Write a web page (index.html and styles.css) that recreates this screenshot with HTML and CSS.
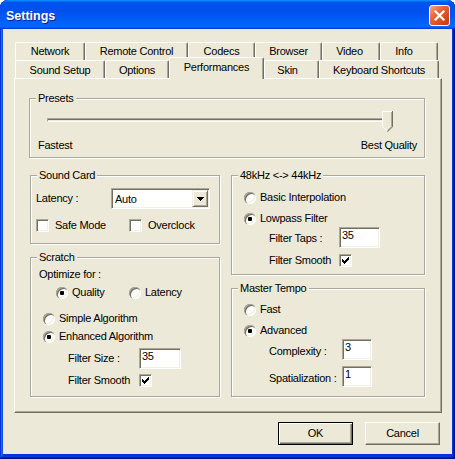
FILE: index.html
```html
<!DOCTYPE html>
<html>
<head>
<meta charset="utf-8">
<title>Settings</title>
<link rel="stylesheet" href="styles.css">
</head>
<body>
<div class="window">
  <div class="titlebar">
    <span class="title">Settings</span>
    <span class="close"><svg width="11" height="11" viewBox="0 0 11 11"><path d="M1.5 1.5L9.5 9.5M9.5 1.5L1.5 9.5" stroke="#fff" stroke-width="2.2" stroke-linecap="square"/></svg></span>
  </div>
  <div class="client">
    <div class="tabstrip">
      <div class="tabrow back">
        <div class="tab t-network">Network</div>
        <div class="tab t-remote">Remote Control</div>
        <div class="tab t-codecs">Codecs</div>
        <div class="tab t-browser">Browser</div>
        <div class="tab t-video">Video</div>
        <div class="tab t-info">Info</div>
      </div>
      <div class="tabrow front">
        <div class="tab t-sound">Sound Setup</div>
        <div class="tab t-options">Options</div>
        <div class="tab t-perf selected">Performances</div>
        <div class="tab t-skin">Skin</div>
        <div class="tab t-keys">Keyboard Shortcuts</div>
      </div>
    </div>

    <div class="panel">
      <div class="group presets">
        <div class="gtitle">Presets</div>
        <div class="gbody">
          <div class="slider">
            <div class="track"></div>
            <svg class="thumb" width="11" height="21" viewBox="0 0 11 21">
              <path d="M0 0H11V16L5.5 21L0 16Z" fill="#ECE9D8"/>
              <path d="M0.5 16V0.5H10" fill="none" stroke="#fff"/>
              <path d="M0.5 15.5L5.2 20.2" fill="none" stroke="#fff"/>
              <path d="M9.5 1V15.6L5.5 19.6" fill="none" stroke="#ACA899"/>
              <path d="M10.5 0V15.8L5.5 20.8" fill="none" stroke="#716F64"/>
            </svg>
          </div>
          <div class="scale"><span>Fastest</span><span>Best Quality</span></div>
        </div>
      </div>

      <div class="columns">
        <div class="col left">
          <div class="group soundcard">
            <div class="gtitle">Sound Card</div>
            <div class="gbody">
              <div class="row">
                <span class="lbl w-latency">Latency :</span>
                <div class="select">
                  <span class="val">Auto</span>
                  <span class="arrow"><svg width="7" height="4" viewBox="0 0 7 4" shape-rendering="crispEdges"><path d="M0 0h7v1H0zM1 1h5v1H1zM2 2h3v1H2zM3 3h1v1H3z" fill="#000"/></svg></span>
                </div>
              </div>
              <div class="row checks">
                <div class="opt w-safe"><span class="check"></span><span>Safe Mode</span></div>
                <div class="opt"><span class="check"></span><span>Overclock</span></div>
              </div>
            </div>
          </div>

          <div class="group scratch">
            <div class="gtitle">Scratch</div>
            <div class="gbody">
              <div class="line">Optimize for :</div>
              <div class="row optimize">
                <div class="opt w-quality"><span class="radio on"></span><span>Quality</span></div>
                <div class="opt"><span class="radio"></span><span>Latency</span></div>
              </div>
              <div class="opt algo simple"><span class="radio"></span><span>Simple Algorithm</span></div>
              <div class="opt algo enhanced"><span class="radio on"></span><span>Enhanced Algorithm</span></div>
              <div class="row sub sc-size">
                <span class="lbl w-fsize">Filter Size :</span>
                <span class="edit w-42">35</span>
              </div>
              <div class="row sub sc-smooth">
                <span class="lbl w-fsize">Filter Smooth</span>
                <span class="check"><svg width="7" height="7" viewBox="0 0 7 7" shape-rendering="crispEdges"><path d="M0 2h1v3H0zM1 3h1v3H1zM2 4h1v3H2zM3 3h1v3H3zM4 2h1v3H4zM5 1h1v3H5zM6 0h1v3H6z" fill="#000"/></svg></span>
              </div>
            </div>
          </div>
        </div>

        <div class="col right">
          <div class="group khz">
            <div class="gtitle">48kHz &lt;-&gt; 44kHz</div>
            <div class="gbody">
              <div class="opt"><span class="radio"></span><span>Basic Interpolation</span></div>
              <div class="opt lowpass"><span class="radio on"></span><span>Lowpass Filter</span></div>
              <div class="row sub k-taps">
                <span class="lbl w-taps low1">Filter Taps :</span>
                <span class="edit w-41">35</span>
              </div>
              <div class="row sub k-smooth">
                <span class="lbl w-taps">Filter Smooth</span>
                <span class="check"><svg width="7" height="7" viewBox="0 0 7 7" shape-rendering="crispEdges"><path d="M0 2h1v3H0zM1 3h1v3H1zM2 4h1v3H2zM3 3h1v3H3zM4 2h1v3H4zM5 1h1v3H5zM6 0h1v3H6z" fill="#000"/></svg></span>
              </div>
            </div>
          </div>

          <div class="group tempo">
            <div class="gtitle">Master Tempo</div>
            <div class="gbody">
              <div class="opt"><span class="radio"></span><span>Fast</span></div>
              <div class="opt advanced"><span class="radio on"></span><span>Advanced</span></div>
              <div class="row sub m-cx">
                <span class="lbl w-cx low2">Complexity :</span>
                <span class="edit w-30">3</span>
              </div>
              <div class="row sub m-sp">
                <span class="lbl w-cx low2">Spatialization :</span>
                <span class="edit w-30">1</span>
              </div>
            </div>
          </div>
        </div>
      </div>
    </div>

    <div class="buttons">
      <button class="btn default">OK</button>
      <button class="btn">Cancel</button>
    </div>
  </div>
</div>
</body>
</html>
```
FILE: styles.css
```css
* { box-sizing: border-box; }
html, body { margin: 0; padding: 0; background: #ffffff; }
body {
  font-family: "Liberation Sans", Arial, sans-serif;
  font-size: 11px;
  line-height: 13px;
  letter-spacing: -0.25px;
  color: #000;
}

/* window frame */
.window {
  width: 455px;
  height: 459px;
  display: flex;
  flex-direction: column;
  background: #0831d9;
  border-radius: 8px 8px 0 0;
  overflow: hidden;
  box-shadow: inset -1px -1px #00138c, inset 1px 1px #0831d9, inset -2px -2px #001ea0,
              inset 2px 2px #166aee, inset -3px -3px #003bda, inset 3px 3px #0855dd;
}
.titlebar {
  flex: none;
  height: 29px;
  display: flex;
  justify-content: space-between;
  align-items: flex-start;
  padding: 0 5px 0 6px;
  border-radius: 8px 8px 0 0;
  background: linear-gradient(180deg, #0997ff, #0053ee 8%, #0050ee 40%, #0066ff 88%, #0066ff 93%, #005bff 95%, #003dd7 96%, #003dd7);
}
.title {
  margin-top: 9px;
  font: bold 12.5px/14px "Liberation Sans", Arial, sans-serif;
  letter-spacing: 0;
  color: #fff;
  text-shadow: 1px 1px 0 #0f1f8a;
}
.close {
  margin-top: 5px;
  width: 21px;
  height: 21px;
  border: 1px solid #fff;
  border-radius: 3px;
  display: flex;
  align-items: center;
  justify-content: center;
  background: linear-gradient(135deg, #f2a88f 0%, #e46a43 35%, #d64b21 70%, #bf3812 100%);
}

.client {
  flex: 1;
  margin: 0 3px 5px 3px;
  background: #ECE9D8;
  padding: 13px 10px 0 11px;
}

/* tabs */
.tabstrip { margin-left: 1px; }
.tabrow { display: flex; height: 18px; }
.tab {
  flex: none;
  height: 18px;
  padding-top: 2px;
  text-align: center;
  white-space: nowrap;
  background: #ECE9D8;
  border-top: 1px solid #fff;
  border-left: 1px solid #fff;
  border-right: 1px solid #716F64;
  box-shadow: inset -1px 0 0 #ACA899;
  border-radius: 2px 2px 0 0;
}
.front .tab { padding-top: 3px; }
.tab.selected {
  height: 22px;
  margin-top: -3px;
  padding-top: 3px;
  position: relative;
  z-index: 1;
}
.t-network { width: 70px; }
.t-remote { width: 103px; }
.t-codecs { width: 67px; }
.t-browser { width: 67px; }
.t-video { width: 58px; padding-right: 3px; }
.t-info { width: 58px; padding-right: 10px; }
.t-sound { width: 90px; }
.t-options { width: 64px; }
.t-perf { width: 95px; }
.t-skin { width: 55px; padding-right: 8px; }
.t-keys { width: 120px; }

/* panel */
.panel {
  height: 335px;
  border: 1px solid;
  border-color: #fff #716F64 #716F64 #fff;
  box-shadow: inset -1px -1px 0 #ACA899;
  padding: 19px 16px 0 14px;
}

/* group boxes */
.group {
  border: 1px solid #ACA899;
  box-shadow: 1px 1px 0 #fff, inset 1px 1px 0 #fff;
}
.gtitle {
  width: fit-content;
  height: 13px;
  margin: -7px 0 0 6px;
  padding: 0 2px;
  background: #ECE9D8;
  white-space: nowrap;
}

.presets .gbody { padding: 0 7px 5px 8px; }
.slider { display: flex; align-items: flex-start; height: 21px; margin: 6px 24px 0 9px; }
.track {
  flex: 1;
  height: 4px;
  margin-top: 7px;
  margin-right: -11px;
  border-top: 1px solid #ACA899;
  border-left: 1px solid #ACA899;
  border-bottom: 1px solid #fff;
  border-right: 1px solid #fff;
  box-shadow: inset 0 1px 0 #716F64;
}
.thumb { flex: none; display: block; }
.scale { display: flex; justify-content: space-between; margin-top: 7px; }

.columns { display: flex; gap: 11px; margin-top: 17px; padding-left: 1px; }
.col { display: flex; flex-direction: column; }
.col.left { width: 190px; }
.col.right { width: 194px; }

.row { display: flex; align-items: center; }
.lbl { flex: none; white-space: nowrap; }
.low1 { padding-top: 1px; }
.low2 { padding-top: 3px; }
.opt { display: flex; align-items: center; height: 13px; gap: 4px; white-space: nowrap; }
.checks .opt { gap: 6px; }

/* controls */
.check {
  flex: none;
  width: 13px;
  height: 13px;
  padding: 2px;
  border: 1px solid;
  border-color: #ACA899 #fff #fff #ACA899;
  box-shadow: inset 1px 1px 0 #716F64, inset -1px -1px 0 #F1EFE2;
  background: #fff;
}
.check svg { display: block; }
.radio {
  flex: none;
  width: 12px;
  height: 12px;
  border-radius: 50%;
  background: #fff;
  display: flex;
  align-items: center;
  justify-content: center;
  box-shadow: inset 1px 1px 0 #ACA899, inset 2px 2px 0 #716F64,
              inset -1px -1px 0 #fff, inset -2px -2px 0 #F1EFE2;
}
.radio.on::after {
  content: "";
  width: 4px;
  height: 4px;
  border-radius: 1px;
  background: #000;
}
.edit {
  flex: none;
  height: 21px;
  padding: 1px 0 0 2px;
  border: 1px solid;
  border-color: #ACA899 #fff #fff #ACA899;
  box-shadow: inset 1px 1px 0 #716F64, inset -1px -1px 0 #F1EFE2;
  background: #fff;
}
.w-42 { width: 42px; }
.w-41 { width: 41px; }
.w-30 { width: 30px; }

.select {
  flex: none;
  width: 99px;
  height: 21px;
  display: flex;
  padding: 1px 1px 1px 2px;
  border: 1px solid;
  border-color: #ACA899 #fff #fff #ACA899;
  box-shadow: inset 1px 1px 0 #716F64, inset -1px -1px 0 #F1EFE2;
  background: #fff;
}
.select .val { flex: 1; padding: 3px 0 0 1px; }
.select .arrow {
  flex: none;
  width: 16px;
  height: 17px;
  display: flex;
  align-items: center;
  justify-content: center;
  background: #ECE9D8;
  border: 1px solid;
  border-color: #F1EFE2 #716F64 #716F64 #F1EFE2;
  box-shadow: inset 1px 1px 0 #fff, inset -1px -1px 0 #ACA899;
}
.select .arrow svg { display: block; }

/* sound card */
.soundcard .gbody { padding: 6px 0 11px 5px; }
.w-latency { width: 75px; }
.checks { margin-top: 10px; }
.w-safe { width: 93px; }

/* scratch */
.scratch { margin-top: 13px; }
.scratch .gbody { padding: 4px 0 9px 8px; }
.optimize { margin-top: 5px; padding-left: 17px; }
.w-quality { width: 73px; }
.algo { margin-left: 4px; }
.simple { margin-top: 13px; }
.enhanced { margin-top: 5px; }
.sub { padding-left: 29px; }
.w-fsize { width: 71px; }
.sc-size { margin-top: 5px; }
.sc-smooth { margin-top: 5px; }

/* 48 kHz */
.khz .gbody { padding: 9px 0 7px 12px; }
.lowpass { margin-top: 8px; }
.khz .sub { padding-left: 25px; }
.w-taps { width: 70px; }
.k-taps { margin-top: 2px; }
.k-smooth { margin-top: 6px; }

/* master tempo */
.tempo { margin-top: 13px; }
.tempo .gbody { padding: 8px 0 9px 12px; }
.advanced { margin-top: 8px; }
.tempo .sub { padding-left: 25px; }
.w-cx { width: 73px; }
.m-cx { margin-top: 2px; }
.m-sp { margin-top: 6px; }

/* buttons */
.buttons { display: flex; justify-content: flex-end; gap: 12px; margin: 9px 2px 0 0; }
.btn {
  width: 75px;
  height: 23px;
  padding: 0;
  font: inherit;
  letter-spacing: inherit;
  color: #000;
  background: #ECE9D8;
  border: 1px solid;
  border-color: #fff #716F64 #716F64 #fff;
  box-shadow: inset -1px -1px 0 #ACA899;
  border-radius: 0;
}
.btn.default {
  border-color: #000;
  box-shadow: inset 1px 1px 0 #fff, inset -1px -1px 0 #716F64, inset -2px -2px 0 #ACA899;
}
```
